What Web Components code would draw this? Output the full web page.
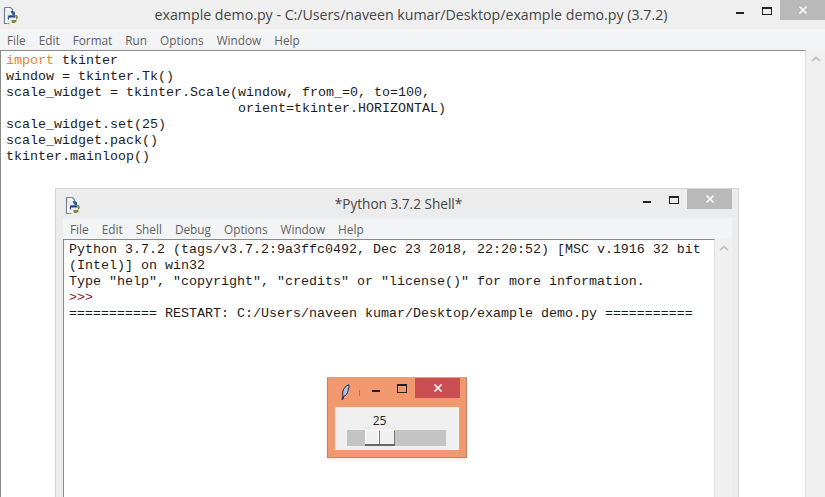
<!DOCTYPE html>
<html>
<head>
<meta charset="utf-8">
<title>example demo.py</title>
<style>
  html, body { margin: 0; height: 100%; background: #fff; overflow: hidden; }
  idle-window { height: 497px; }
  #shell { position: absolute; left: 55px; top: 188px; width: 684px; height: 309px; }
  #tk { position: absolute; left: 327px; top: 377px; }
</style>
</head>
<body>
<idle-window title-text="example demo.py - C:/Users/naveen kumar/Desktop/example demo.py (3.7.2)"
  menus="File,Edit,Format,Run,Options,Window,Help" variant="editor">
  <code-view>
    <div><span style="color:#e8842a">import</span> tkinter</div>
    <div>window = tkinter.Tk()</div>
    <div>scale_widget = tkinter.Scale(window, from_=0, to=100,</div>
    <div>                             orient=tkinter.HORIZONTAL)</div>
    <div>scale_widget.set(25)</div>
    <div>scale_widget.pack()</div>
    <div>tkinter.mainloop()</div>
  </code-view>
</idle-window>

<idle-window id="shell" title-text="*Python 3.7.2 Shell*"
  menus="File,Edit,Shell,Debug,Options,Window,Help" variant="shell">
  <code-view>
    <div>Python 3.7.2 (tags/v3.7.2:9a3ffc0492, Dec 23 2018, 22:20:52) [MSC v.1916 32 bit</div>
    <div>(Intel)] on win32</div>
    <div>Type "help", "copyright", "credits" or "license()" for more information.</div>
    <div style="color:#8c1c2c">&gt;&gt;&gt;</div>
    <div>=========== RESTART: C:/Users/naveen kumar/Desktop/example demo.py ===========</div>
  </code-view>
</idle-window>

<tk-window id="tk"><tk-scale value="25"></tk-scale></tk-window>

<script>
const FILE_ICON = `<svg width="18" height="20" viewBox="0 0 18 20">
  <path d="M2.500 1.500h6l2 2v3M2.500 1.500v16h3" fill="#fff" stroke="#6f7f96" stroke-width="1.200"/>
  <path d="M5.500 17.500h2" stroke="#9a9a6a" stroke-width="1.200"/>
  <path d="M8.500 5.500c2.500-1 4.500 0 4.500 1.500v2.500H8.500c-1.800 0-2.800 1-2.800 2.500S7 14 7 14v-1.500c0-1 .8-1.700 1.800-1.700h3" fill="#2f5f9f"/>
  <path d="M13 9h1c1.200 0 1.800 1 1.800 2.300 0 2-1.500 2.700-2.800 2.700H9.500v1.500c0 1.200 1 1.800 2.500 1.500 1.500-.3 2.500-1 2.500-2" fill="#7d8a3c"/>
  <path d="M6 9.500h7v2H7z" fill="#22467c"/>
</svg>`;

const titleTemplate = document.createElement("template");
titleTemplate.innerHTML = `
<style>
  :host {
    display: flex;
    flex: none;
    align-items: flex-start;
    height: 29px;
    background: var(--title-bg, #efefef);
    font-family: "Open Sans", sans-serif;
  }
  .icon { width: 18px; height: 20px; margin: var(--icon-m, 6px 0 0 2px); }
  .text {
    flex: 1;
    text-align: center;
    font-size: var(--title-size, 14.2px);
    line-height: 29px;
    color: #444;
    white-space: nowrap;
    padding: var(--title-pad, 0 0 0 66px);
  }
  .buttons { display: flex; align-items: flex-start; }
  .min { width: 8px; height: 2px; background: #222; margin: 12px 18px 0 0; }
  .max { width: 8px; height: 5px; border: 1px solid #222; border-top-width: 2px; margin: 7px 8px 0 0; }
  .close {
    width: 45px; height: 20px; background: #b9b9b9;
    display: flex; align-items: center; justify-content: center;
  }
</style>
<div class="icon"></div>
<div class="text"></div>
<div class="buttons">
  <div class="min"></div>
  <div class="max"></div>
  <div class="close"><svg width="10" height="10" viewBox="0 0 10 10"><path d="M1.500 1.500l7 7M8.500 1.500l-7 7" stroke="#fff" stroke-width="1.600"/></svg></div>
</div>
`;

class TitleBar extends HTMLElement {
  constructor() {
    super();
    this.shadow = this.attachShadow({ mode: "open" });
    this.shadow.append(titleTemplate.content.cloneNode(true));
    this.shadow.querySelector(".icon").innerHTML = FILE_ICON;
  }

  static get observedAttributes() {
    return ["text"];
  }

  attributeChangedCallback(name, _oldValue, newValue) {
    if (name === "text") {
      this.shadow.querySelector(".text").textContent = newValue;
    }
  }
}

customElements.define("title-bar", TitleBar);

class MenuBar extends HTMLElement {
  constructor() {
    super();
    this.shadow = this.attachShadow({ mode: "open" });
    this.shadow.innerHTML = `
<style>
  :host {
    display: flex;
    flex: none;
    height: 21px;
    background: #f3f4f6;
    align-items: center;
    gap: 13px;
    padding: 0 0 0 7px;
    font: 11.8px "Open Sans", sans-serif;
    color: #5f5f5f;
  }
</style>`;
  }

  static get observedAttributes() {
    return ["items"];
  }

  attributeChangedCallback(name, _oldValue, newValue) {
    if (name === "items") {
      newValue.split(",").forEach((label) => {
        const item = document.createElement("span");
        item.textContent = label;
        this.shadow.append(item);
      });
    }
  }
}

customElements.define("menu-bar", MenuBar);

class ScrollRail extends HTMLElement {
  constructor() {
    super();
    this.attachShadow({ mode: "open" }).innerHTML = `
<style>
  :host {
    display: flex;
    flex: none;
    justify-content: center;
    width: var(--rail-w, 19px);
    background: #f0f0f0;
    padding-top: 6px;
    box-sizing: border-box;
  }
  svg { display: block; }
</style>
<svg width="10" height="6" viewBox="0 0 10 6"><path d="M1 5l4-3.500L9 5" fill="none" stroke="#c3c3c3" stroke-width="1.800"/></svg>`;
  }
}

customElements.define("scroll-rail", ScrollRail);

class CodeView extends HTMLElement {
  constructor() {
    super();
    this.attachShadow({ mode: "open" }).innerHTML = `
<style>
  :host {
    display: block;
    font: 13.33px/16px "Liberation Mono", monospace;
    color: #1c1c1c;
    padding: 2px 0 0 5px;
  }
  ::slotted(div) { white-space: pre; }
</style>
<slot></slot>`;
  }
}

customElements.define("code-view", CodeView);

const windowTemplate = document.createElement("template");
windowTemplate.innerHTML = `
<style>
  :host {
    display: flex;
    flex-direction: column;
    box-sizing: border-box;
    background: #fff;
  }
  :host([variant="shell"]) {
    background: #ececec;
    border: 1px solid #d4d4d4;
    border-bottom: 0;
    padding-right: 6px;
    --title-bg: #ececec;
    --title-size: 13.6px;
    --title-pad: 0 0 0 72px;
    --icon-m: 7px 0 0 8px;
    --rail-w: 17px;
  }
  .menu-row { flex: none; }
  :host([variant="shell"]) .menu-row { margin-left: 7px; }
  .body { display: flex; flex: 1; min-height: 0; }
  :host([variant="shell"]) .body { margin-left: 7px; }
  .text {
    flex: 1;
    min-width: 0;
    background: #fff;
    border-top: 1px solid #8a8a8a;
    border-left: 1px solid #8a8a8a;
    border-right: 1px solid #dedede;
  }
</style>
<title-bar></title-bar>
<div class="menu-row"><menu-bar></menu-bar></div>
<div class="body">
  <div class="text"><slot></slot></div>
  <scroll-rail></scroll-rail>
</div>
`;

class IdleWindow extends HTMLElement {
  constructor() {
    super();
    this.shadow = this.attachShadow({ mode: "open" });
    this.shadow.append(windowTemplate.content.cloneNode(true));
  }

  connectedCallback() {
    this.shadow.querySelector("title-bar").setAttribute("text", this.getAttribute("title-text"));
    this.shadow.querySelector("menu-bar").setAttribute("items", this.getAttribute("menus"));
  }
}

customElements.define("idle-window", IdleWindow);

class TkWindow extends HTMLElement {
  constructor() {
    super();
    this.attachShadow({ mode: "open" }).innerHTML = `
<style>
  :host {
    display: block;
    width: 140px;
    height: 81px;
    box-sizing: border-box;
    background: #f2986f;
    border: 1px solid #b9846a;
    border-top-color: #e0a184;
    box-shadow: 0 2px 3px #f1ece8;
  }
  .bar { display: flex; align-items: flex-start; height: 29px; padding-right: 6px; }
  .feather { margin: 6px 0 0 12px; }
  .tick { width: 1px; height: 6px; background: #c46d4c; margin: 12px 0 0 9px; }
  .min { width: 8px; height: 2px; background: #222; margin: 12px 0 0 12px; }
  .max { width: 8px; height: 6px; border: 1px solid #222; border-top-width: 2px; margin: 6px 0 0 17px; }
  .close {
    width: 45px; height: 20px; background: #c94f53; margin-left: auto;
    display: flex; align-items: center; justify-content: center;
  }
  .content {
    margin: 0 7px 0 7px;
    height: 43px;
    background: #efefef;
    border: 1px solid #fbf6f2;
    border-width: 0 1px 1px 1px;
    box-sizing: border-box;
  }
</style>
<div class="bar">
  <svg class="feather" width="10" height="16" viewBox="0 0 10 16"><path d="M9 .8C6 1.500 3.500 4 2.800 8c-.3 1.500-.2 3 .1 4L2 15.500h.8l.9-3.200c2.300-.4 3.800-3 4.500-5.800C8.700 4.300 9.200 2.300 9 .8z" fill="#a9c0ea" stroke="#23233a" stroke-width="1"/></svg>
  <div class="tick"></div>
  <div class="min"></div>
  <div class="max"></div>
  <div class="close"><svg width="10" height="10" viewBox="0 0 10 10"><path d="M1.500 1.500l7 7M8.500 1.500l-7 7" stroke="#fff" stroke-width="1.600"/></svg></div>
</div>
<div class="content"><slot></slot></div>`;
  }
}

customElements.define("tk-window", TkWindow);

class TkScale extends HTMLElement {
  constructor() {
    super();
    this.shadow = this.attachShadow({ mode: "open" });
    this.shadow.innerHTML = `
<style>
  :host {
    display: flex;
    flex-direction: column;
    padding: 6px 0 0 11px;
    font: 12px "Open Sans", sans-serif;
    color: #222;
  }
  .value { width: 65px; text-align: center; line-height: 15px; height: 17px; }
  .trough {
    display: flex;
    width: 99px;
    height: 16px;
    background: #c4c4c4;
    padding-left: 18px;
    box-sizing: border-box;
  }
  .slider {
    display: flex;
    width: 30px;
    height: 16px;
    box-sizing: border-box;
    border-bottom: 2px solid #666;
  }
  .half { flex: none; box-sizing: border-box; width: 14px; background: #f0f0f0; border: 1px solid #fff; border-bottom: 0; }
  .half + .half { width: 16px; border-left: 1px solid #777; border-right: 1px solid #777; }
</style>
<div class="value"></div>
<div class="trough"><div class="slider"><div class="half"></div><div class="half"></div></div></div>`;
  }

  connectedCallback() {
    this.shadow.querySelector(".value").textContent = this.getAttribute("value");
  }
}

customElements.define("tk-scale", TkScale);
</script>
</body>
</html>
